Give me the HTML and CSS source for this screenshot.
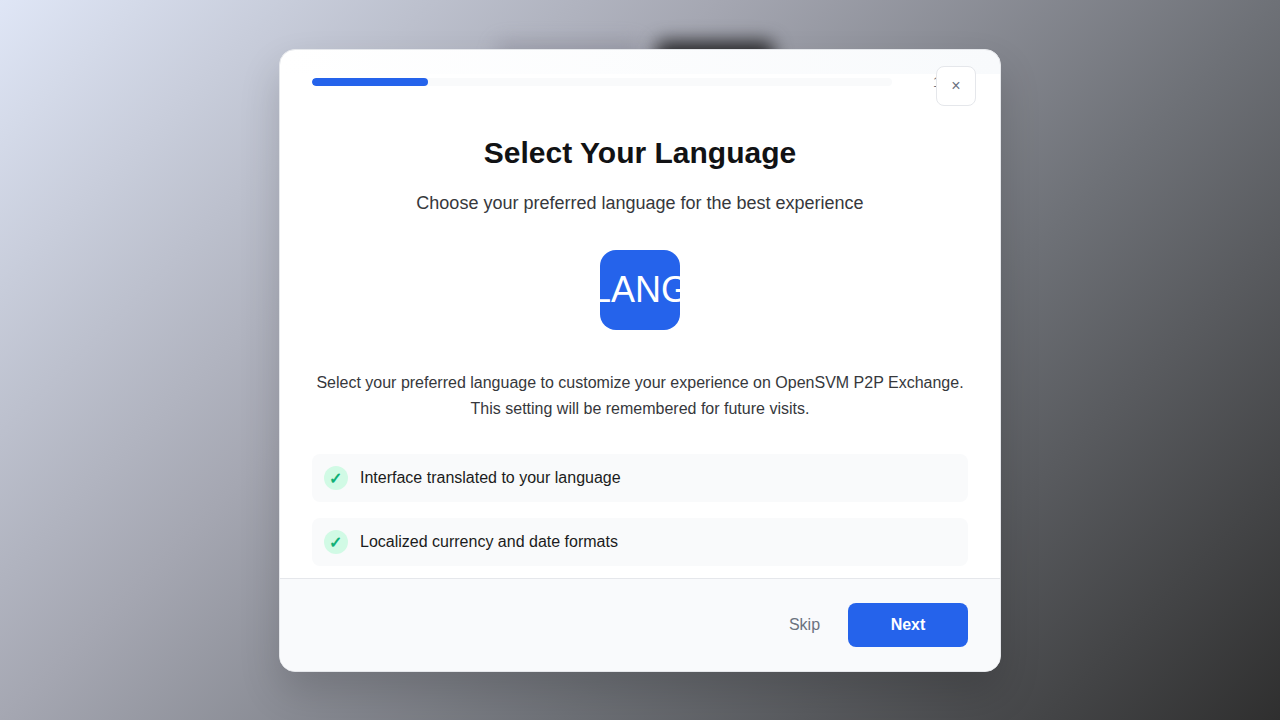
FILE: index.html
```html
<!DOCTYPE html>
<html lang="en">
<head>
<meta charset="utf-8">
<title>Select Your Language</title>
<link rel="stylesheet" href="styles.css">
</head>
<body>
<div class="backdrop">
  <div class="blob blob-light"></div>
  <div class="blob blob-dark"></div>
  <main class="modal" role="dialog" aria-labelledby="title">
    <button class="close" aria-label="Close">×</button>
    <header class="progress">
      <div class="track"><div class="fill"></div></div>
      <span class="count">1 of 5</span>
    </header>
    <section class="content">
      <h1 class="title" id="title">Select Your Language</h1>
      <p class="subtitle">Choose your preferred language for the best experience</p>
      <div class="badge">LANG</div>
      <p class="description">Select your preferred language to customize your experience on OpenSVM P2P Exchange. This setting will be remembered for future visits.</p>
      <ul class="features">
        <li class="feature"><span class="check">✓</span>Interface translated to your language</li>
        <li class="feature"><span class="check">✓</span>Localized currency and date formats</li>
      </ul>
    </section>
    <footer class="footer">
      <button class="skip">Skip</button>
      <button class="next">Next</button>
    </footer>
  </main>
</div>
</body>
</html>
```
FILE: styles.css
```css
* { box-sizing: border-box; margin: 0; padding: 0; }
body { font-family: "Liberation Sans", Arial, sans-serif; }
button { font: inherit; border: 0; background: none; }

.backdrop {
  position: relative;
  height: 720px;
  overflow: hidden;
  display: flex;
  justify-content: center;
  align-items: flex-start;
  padding-top: 49px;
  background: linear-gradient(135deg, #dfe6f6 0%, #a5a7b2 36%, #6e7177 64%, #2f2f2f 100%);
}
.blob { position: absolute; top: 41px; height: 56px; filter: blur(9px); border-radius: 8px; }
.blob-light { left: 496px; width: 144px; background: rgba(125, 125, 139, 0.35); }
.blob-dark { left: 656px; width: 118px; background: #29292c; }

.modal {
  position: relative;
  width: 722px;
  height: 623px;
  display: flex;
  flex-direction: column;
  overflow: hidden;
  border: 1px solid #e5e7eb;
  border-radius: 16px;
  background: linear-gradient(90deg, #fff 0%, #f8fafc 100%) top / 100% 24px no-repeat, #fff;
  box-shadow: 0 20px 40px rgba(0, 0, 0, 0.16);
}
.close {
  position: absolute;
  top: 16px;
  right: 24px;
  width: 40px;
  height: 40px;
  border: 1px solid #e5e7eb;
  border-radius: 8px;
  background: #fff;
  color: #6b7280;
  font-size: 16px;
}
.progress { display: flex; align-items: center; justify-content: space-between; padding: 24px 32px 0; }
.track { width: 580px; height: 8px; border-radius: 4px; background: #f9fafb; overflow: hidden; }
.fill { width: 20%; height: 100%; border-radius: 4px; background: #2563eb; }
.count { font-size: 14px; line-height: 16px; color: #6b7280; }

.content { flex: 1; min-height: 0; overflow: hidden; padding: 43px 32px 0; text-align: center; }
.title { font-size: 30px; line-height: 40px; color: #111214; }
.subtitle { margin-top: 16px; font-size: 18px; line-height: 28px; color: #36383c; }
.badge {
  display: flex;
  align-items: center;
  justify-content: center;
  width: 80px;
  height: 80px;
  margin: 33px auto 40px;
  border-radius: 16px;
  background: #2563eb;
  color: #fff;
  font-size: 36px;
}
.description { font-size: 16px; line-height: 26px; color: #36383c; }
.features { display: flex; flex-direction: column; gap: 16px; margin-top: 32px; list-style: none; }
.feature {
  display: flex;
  align-items: center;
  gap: 12px;
  height: 48px;
  padding: 0 12px;
  border-radius: 8px;
  background: #f9fafb;
  color: #1b1c20;
  font-size: 16px;
}
.check {
  display: flex;
  align-items: center;
  justify-content: center;
  width: 24px;
  height: 24px;
  padding-right: 1px;
  border-radius: 50%;
  background: #d1fae5;
  color: #10b077;
  font-weight: bold;
}
.footer {
  display: flex;
  justify-content: flex-end;
  align-items: center;
  height: 93px;
  padding: 0 32px;
  border-top: 1px solid #e5e7eb;
  background: #f9fafc;
}
.skip { width: 87px; height: 44px; color: #6b7280; font-size: 16px; }
.next { width: 120px; height: 44px; border-radius: 8px; background: #2563eb; color: #fff; font-size: 16px; font-weight: bold; }
```
